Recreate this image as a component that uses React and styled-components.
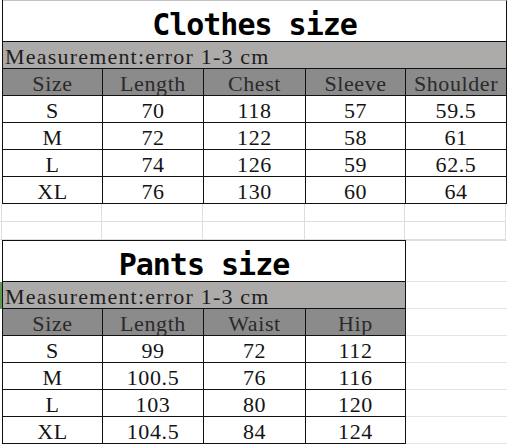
import React from "react";
import styled, { createGlobalStyle } from "styled-components";

const GlobalStyle = createGlobalStyle`
  html, body {
    margin: 0;
    padding: 0;
    background: #fff;
  }
`;

const clothes = {
  title: "Clothes size",
  cols: "100px 101px 102px 100px 101px",
  headers: ["Size", "Length", "Chest", "Sleeve", "Shoulder"],
  rows: [
    ["S", "70", "118", "57", "59.5"],
    ["M", "72", "122", "58", "61"],
    ["L", "74", "126", "59", "62.5"],
    ["XL", "76", "130", "60", "64"],
  ],
};

const pants = {
  title: "Pants size",
  cols: "100px 101px 102px 100px",
  headers: ["Size", "Length", "Waist", "Hip"],
  rows: [
    ["S", "99", "72", "112"],
    ["M", "100.5", "76", "116"],
    ["L", "103", "80", "120"],
    ["XL", "104.5", "84", "124"],
  ],
};

const Sheet = styled.div`
  width: 507px;
  height: 445px;
  overflow: hidden;
  background: #fff;
  display: flex;
  flex-direction: column;
`;

const Block = styled.div`
  display: flex;
`;

const Gutter = styled.div`
  width: 2px;
  flex-shrink: 0;
  background: ${(p) =>
    p.$mark
      ? "linear-gradient(to bottom, transparent 42px, #5f9a52 42px, #5f9a52 69px, transparent 69px)"
      : "transparent"};
`;

const Table = styled.div`
  display: grid;
  grid-template-columns: ${(p) => p.$cols};
  border-left: 1px solid #111;
`;

const cellBase = `
  box-sizing: border-box;
  border-right: 1px solid #111;
  border-bottom: 1px solid #111;
  font-family: "Liberation Serif", "DejaVu Serif", serif;
  font-size: 22px;
  letter-spacing: 0.6px;
  white-space: nowrap;
  display: flex;
  align-items: center;
`;

const Title = styled.div`
  ${cellBase}
  grid-column: 1 / -1;
  height: 42px;
  border-top: 1px solid ${(p) => p.$line};
  justify-content: center;
  padding-top: 6px;
  font-family: "DejaVu Sans Mono", "Liberation Mono", monospace;
  font-weight: bold;
  font-size: 30px;
  letter-spacing: -1px;
  color: #000;
`;

const Note = styled.div`
  ${cellBase}
  grid-column: 1 / -1;
  height: 27px;
  padding: 4px 0 0 2px;
  letter-spacing: 1.2px;
  background: #adaaaa;
  color: #1e1e1e;
`;

const Head = styled.div`
  ${cellBase}
  height: 27px;
  padding-top: 4px;
  justify-content: center;
  background: #8b8b8b;
  color: #2a2a2a;
`;

const Cell = styled.div`
  ${cellBase}
  height: 27px;
  padding-top: 4px;
  justify-content: center;
  background: #fff;
  color: #141414;
`;

const EmptyGrid = styled.div`
  display: grid;
  grid-template-columns: 2px ${(p) => p.$cols};
`;

const EmptyCell = styled.div`
  box-sizing: border-box;
  height: 18px;
  border-right: 1px solid #dedede;
  border-bottom: 1px solid #dedede;
`;

const Filler = styled.div`
  flex: 1;
  display: flex;
  flex-direction: column;
  border-top: 1px solid #dedede;
`;

const FillerCell = styled.div`
  box-sizing: border-box;
  height: ${(p) => p.$h}px;
  border-bottom: 1px solid #e4e4e4;
`;

function SizeTable({ data, line }) {
  return (
    <Table $cols={data.cols}>
      <Title $line={line}>{data.title}</Title>
      <Note>Measurement:error 1-3 cm</Note>
      {data.headers.map((h) => (
        <Head key={h}>{h}</Head>
      ))}
      {data.rows.map((row) =>
        row.map((v, i) => <Cell key={row[0] + i}>{v}</Cell>)
      )}
    </Table>
  );
}

export default function App() {
  const spacer = Array.from({ length: 12 });
  return (
    <>
      <GlobalStyle />
      <Sheet>
        <Block>
          <Gutter />
          <SizeTable data={clothes} line="#c4c4c4" />
        </Block>

        <EmptyGrid $cols={clothes.cols}>
          {spacer.map((_, i) => (
            <EmptyCell key={i} />
          ))}
        </EmptyGrid>

        <Block>
          <Gutter $mark />
          <SizeTable data={pants} line="#111" />
          <Filler>
            {[41, 27, 27, 27, 27, 27, 27].map((h, i) => (
              <FillerCell key={i} $h={h} />
            ))}
          </Filler>
        </Block>
      </Sheet>
    </>
  );
}
